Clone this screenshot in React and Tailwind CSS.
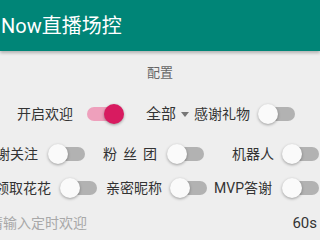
import React, { useState } from 'react'

const font = { fontFamily: 'Roboto, "Noto Sans CJK SC", sans-serif' }

//  Material style switch: 40px box, 34px track, 20px thumb
const Switch = ({ on, onToggle, className = '' }) => (
  <button type="button" onClick={onToggle}
          className={`relative shrink-0 w-[40px] h-[22px] ${className}`}>
    <span className={`absolute left-[3px] top-[4px] w-[34px] h-[14px] rounded-full ${on ? 'bg-[#eea0bc]' : 'bg-[#b2b2b2]'}`} />
    <span className={`absolute top-[1px] w-[20px] h-[20px] rounded-full shadow-[0_1px_3px_rgba(0,0,0,0.35)] ${on ? 'left-[20px] bg-[#d81b60]' : 'left-0 bg-[#fafafa]'}`} />
  </button>
)

const Label = ({ children, className = '' }) => (
  <span className={`shrink-0 whitespace-nowrap text-[14px] leading-none text-[#333] ${className}`}>{children}</span>
)

export default function App() {
  const [sw, setSw] = useState({
    welcome: true, gift: false, follow: false, fans: false,
    robot: false, flower: false, nick: false, mvp: false
  })
  const toggle = key => setSw(s => ({ ...s, [key]: !s[key] }))

  return (
    <div className="w-[320px] h-[240px] overflow-hidden bg-[#eeeeee] flex flex-col" style={font}>
      {/*  Toolbar  */}
      <div className="h-[51px] shrink-0 bg-[#008577] flex items-center shadow-[0_2px_3px_rgba(0,0,0,0.25)] relative z-10">
        <span className="ml-[1px] text-[20px] text-white whitespace-nowrap">Now直播场控</span>
      </div>

      {/*  Section title  */}
      <div className="h-[44px] shrink-0 flex items-center justify-center">
        <span className="text-[13px] text-[#666]">配置</span>
      </div>

      {/*  Row 1  */}
      <div className="h-[38px] shrink-0 flex items-center">
        <Label className="ml-[17px]">开启欢迎</Label>
        <Switch className="ml-[11px]" on={sw.welcome} onToggle={() => toggle('welcome')} />
        <span className="ml-[22px] text-[15px] leading-none text-[#333] whitespace-nowrap">全部</span>
        <span className="ml-[5px] w-0 h-0 border-l-[4px] border-r-[4px] border-t-[5px] border-l-transparent border-r-transparent border-t-[#777]" />
        <Label className="ml-[5px]">感谢礼物</Label>
        <Switch className="ml-[8px]" on={sw.gift} onToggle={() => toggle('gift')} />
      </div>

      {/*  Row 2  */}
      <div className="h-[40px] shrink-0 flex items-center mt-[1px]">
        <Label className="ml-[-18px]">感谢关注</Label>
        <Switch className="ml-[10px]" on={sw.follow} onToggle={() => toggle('follow')} />
        <Label className="ml-[15px] tracking-[6px]">粉丝团</Label>
        <Switch className="ml-[4px]" on={sw.fans} onToggle={() => toggle('fans')} />
        <Label className="ml-[25px]">机器人</Label>
        <Switch className="ml-[8px]" on={sw.robot} onToggle={() => toggle('robot')} />
      </div>

      {/*  Row 3  */}
      <div className="h-[27px] shrink-0 flex items-center">
        <Label className="ml-[-5px]">领取花花</Label>
        <Switch className="ml-[9px]" on={sw.flower} onToggle={() => toggle('flower')} />
        <Label className="ml-[6px]">亲密昵称</Label>
        <Switch className="ml-[8px]" on={sw.nick} onToggle={() => toggle('nick')} />
        <Label className="ml-[4px]">MVP答谢</Label>
        <Switch className="ml-[10px]" on={sw.mvp} onToggle={() => toggle('mvp')} />
      </div>

      {/*  Row 4  */}
      <div className="h-[44px] shrink-0 flex items-center justify-between">
        <input className="ml-[-11px] w-[200px] bg-transparent outline-none text-[14px] leading-none text-[#333] placeholder:text-[#a8a8a8]"
               placeholder="请输入定时欢迎" />
        <span className="mr-[3px] text-[15px] leading-none text-[#333]">60s</span>
      </div>
    </div>
  )
}
